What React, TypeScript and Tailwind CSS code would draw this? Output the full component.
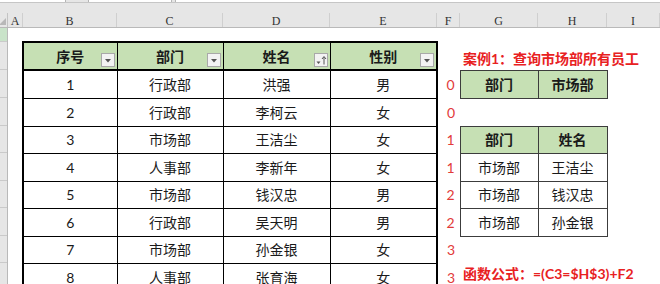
import React from 'react';

const cols = [
  { key: 'A', w: 'w-[15px]' },
  { key: 'B', w: 'w-[94px]' },
  { key: 'C', w: 'w-[106px]' },
  { key: 'D', w: 'w-[107px]' },
  { key: 'E', w: 'w-[107px]' },
  { key: 'F', w: 'w-[23px]' },
  { key: 'G', w: 'w-[78px]' },
  { key: 'H', w: 'w-[69px]' },
  { key: 'I', w: 'w-[53px]' },
];

const rowHeights = ['h-[14px]', 'h-[28px]', 'h-[28px]', 'h-[28px]', 'h-[27px]', 'h-[28px]', 'h-[27px]', 'h-[28px]', 'h-[27px]', 'h-[28px]'];

const staff = [
  { no: 1, dept: '行政部', name: '洪强', sex: '男', f: 0 },
  { no: 2, dept: '行政部', name: '李柯云', sex: '女', f: 0 },
  { no: 3, dept: '市场部', name: '王洁尘', sex: '女', f: 1 },
  { no: 4, dept: '人事部', name: '李新年', sex: '女', f: 1 },
  { no: 5, dept: '市场部', name: '钱汉忠', sex: '男', f: 2 },
  { no: 6, dept: '行政部', name: '吴天明', sex: '男', f: 2 },
  { no: 7, dept: '市场部', name: '孙金银', sex: '女', f: 3 },
  { no: 8, dept: '人事部', name: '张育海', sex: '女', f: 3 },
];

// small result table on the right, keyed by data row index
const result: Record<number, [string, string, boolean]> = {
  0: ['部门', '市场部', true],
  2: ['部门', '姓名', true],
  3: ['市场部', '王洁尘', false],
  4: ['市场部', '钱汉忠', false],
  5: ['市场部', '孙金银', false],
};

function FilterButton({ sort }: { sort?: boolean }) {
  return (
    <div className="absolute right-[2px] bottom-[2px] w-[14px] h-[14px] border border-[#a9a9a9] bg-[#f3f3f3] flex items-center justify-center">
      {sort ? (
        <svg width="12" height="11" viewBox="0 0 12 11">
          <path d="M1.5 6.5h4l-2 2.5z" fill="#555" />
          <path d="M9 9.5V2M7 4l2-2.5 2 2.5" stroke="#555" strokeWidth="1" fill="none" />
        </svg>
      ) : (
        <svg width="8" height="5" viewBox="0 0 8 5">
          <path d="M1 1h6L4 4.5z" fill="#555" />
        </svg>
      )}
    </div>
  );
}

export default function App() {
  const main = "border border-black text-center text-[14px] text-[#1a1a1a]";
  const side = "border border-[#3c3c3c] text-center text-[14px] text-[#1a1a1a]";

  return (
    <div className="w-[660px] h-[284px] overflow-hidden bg-white font-['Lato','Noto_Sans_CJK_SC',sans-serif]">
      {/* formula bar remnant */}
      <div className="h-[13px] bg-[#e6e6e6]">
        <div className="h-[3px] flex border-b border-[#c6c6c6]">
          <div className="w-[66px] bg-white border-r border-[#b5b5b5]" />
          <div className="w-[22px]" />
          <div className="w-[84px] bg-white border-x border-[#b5b5b5]" />
          <div className="w-[3px]" />
          <div className="flex-1 bg-white border-l border-[#b5b5b5]" />
        </div>
      </div>

      {/* column headers */}
      <div className="flex h-[15px] bg-[#e6e6e6] border-b border-[#b9b9b9] font-['Liberation_Serif',serif] text-[12px] text-[#333] leading-[15px]">
        <div className="w-[8px] border-r border-[#c3c3c3] relative">
          <svg className="absolute right-[1px] bottom-[2px]" width="7" height="7" viewBox="0 0 7 7">
            <path d="M7 0v7H0z" fill="#b8b8b8" />
          </svg>
        </div>
        {cols.map((c) => (
          <div key={c.key} className={`${c.w} shrink-0 text-center border-r border-[#cfcfcf] pt-[1px]`}>
            {c.key}
          </div>
        ))}
      </div>

      <div className="flex">
        {/* row headers */}
        <div className="w-[8px] shrink-0 bg-[#e6e6e6] border-r border-[#b9b9b9]">
          {rowHeights.map((h, i) => (
            <div key={i} className={`${h} border-b border-[#cacaca] ${i === 0 ? 'bg-[#c9e3c9]' : ''}`} />
          ))}
        </div>

        <table className="table-fixed border-collapse w-[652px]">
          <colgroup>
            {cols.map((c) => (
              <col key={c.key} className={c.w} />
            ))}
          </colgroup>
          <tbody>
            <tr className="h-[14px]">
              <td colSpan={9} />
            </tr>
            <tr className="h-[28px]">
              <td />
              {['序号', '部门', '姓名', '性别'].map((t, i) => (
                <td
                  key={t}
                  className={`${main} relative font-bold bg-[#c6e0b4] border-t-2 border-b-2 ${i === 0 ? 'border-l-2' : ''} ${i === 3 ? 'border-r-2' : ''}`}
                >
                  {t}
                  <FilterButton sort={i === 2} />
                </td>
              ))}
              <td />
              <td colSpan={3} className="relative">
                <span className="absolute left-[3px] top-[6px] whitespace-nowrap text-[14px] font-bold text-[#e8211f]">
                  案例1：查询市场部所有员工
                </span>
              </td>
            </tr>
            {staff.map((r, i) => {
              const res = result[i];
              return (
                <tr key={r.no} className={rowHeights[i + 2]}>
                  <td />
                  <td className={`${main} border-l-2`}>{r.no}</td>
                  <td className={main}>{r.dept}</td>
                  <td className={main}>{r.name}</td>
                  <td className={`${main} border-r-2`}>{r.sex}</td>
                  <td className="text-right pr-[5px] text-[14px] text-[#e23a3a]">{r.f}</td>
                  {res ? (
                    <>
                      <td className={`${side} ${res[2] ? 'bg-[#c6e0b4] font-bold' : ''}`}>{res[0]}</td>
                      <td className={`${side} ${res[2] ? 'bg-[#c6e0b4] font-bold' : ''}`}>{res[1]}</td>
                      <td />
                    </>
                  ) : i === 7 ? (
                    <td colSpan={3} className="relative">
                      <span className="absolute left-[3px] top-[2px] leading-[18px] whitespace-nowrap text-[14px] font-bold text-[#e8211f]">
                        函数公式：=(C3=$H$3)+F2
                      </span>
                    </td>
                  ) : (
                    <td colSpan={3} />
                  )}
                </tr>
              );
            })}
          </tbody>
        </table>
      </div>
    </div>
  );
}
